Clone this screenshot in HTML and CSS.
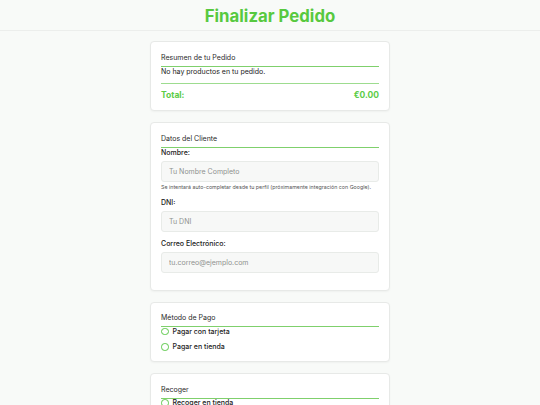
FILE: index.html
```html
<!DOCTYPE html>
<html lang="es">
<head>
<meta charset="utf-8">
<title>Finalizar Pedido</title>
<link rel="stylesheet" href="styles.css">
</head>
<body>
<header class="top">
  <h1 class="title">Finalizar Pedido</h1>
</header>
<main class="page">
  <section class="card">
    <h2 class="card-title">Resumen de tu Pedido</h2>
    <p class="empty">No hay productos en tu pedido.</p>
    <div class="total">
      <span>Total:</span>
      <span>€0.00</span>
    </div>
  </section>

  <section class="card">
    <h2 class="card-title">Datos del Cliente</h2>
    <div class="group">
      <label class="label">Nombre:</label>
      <input class="input" type="text" placeholder="Tu Nombre Completo">
      <p class="help">Se intentará auto-completar desde tu perfil (próximamente integración con Google).</p>
    </div>
    <div class="group">
      <label class="label">DNI:</label>
      <input class="input" type="text" placeholder="Tu DNI">
    </div>
    <div class="group">
      <label class="label">Correo Electrónico:</label>
      <input class="input" type="text" placeholder="tu.correo@ejemplo.com">
    </div>
  </section>

  <section class="card">
    <h2 class="card-title">Método de Pago</h2>
    <div class="options">
      <label class="option"><span class="radio"></span>Pagar con tarjeta</label>
      <label class="option"><span class="radio"></span>Pagar en tienda</label>
    </div>
  </section>

  <section class="card">
    <h2 class="card-title">Recoger</h2>
    <div class="options">
      <label class="option"><span class="radio"></span>Recoger en tienda</label>
    </div>
  </section>
</main>
</body>
</html>
```

FILE: styles.css
```css
* { box-sizing: border-box; }
body {
  margin: 0;
  background: #f8faf8;
  font-family: Inter, "Noto Sans", sans-serif;
  color: #222;
}
.top {
  height: 31px;
  border-bottom: 1px solid #eceeec;
  display: flex;
  align-items: center;
  justify-content: center;
  padding-top: 2px;
}
.title {
  margin: 0;
  font-size: 16.8px;
  font-weight: 700;
  color: #57c93f;
  line-height: 1;
}
.page {
  width: 240px;
  margin: 10px auto 0;
  display: flex;
  flex-direction: column;
  gap: 11px;
}
.card {
  background: #fff;
  border: 1px solid #e7e9e7;
  border-radius: 4px;
  box-shadow: 0 1px 2px rgba(0,0,0,0.04);
  padding: 10px;
}
.card-title {
  margin: 0;
  font-size: 7px;
  font-weight: 400;
  line-height: 10px;
  padding-top: 0.5px;
  padding-bottom: 3px;
  border-bottom: 1.5px solid #7fd06c;
  color: #2a2a2a;
}
.empty {
  margin: 0;
  font-size: 7px;
  line-height: 10px;
  color: #222;
}
.total {
  margin-top: 6.5px;
  border-top: 1.5px solid #9ddc8f;
  padding-top: 6px;
  display: flex;
  justify-content: space-between;
  font-size: 8.5px;
  font-weight: 700;
  color: #5ccc47;
  line-height: 10px;
}
.group {
  margin-bottom: 7px;
  display: flex;
  flex-direction: column;
}
.label {
  font-size: 7px;
  font-weight: 500;
  line-height: 10px;
  margin-bottom: 3px;
  color: #222;
}
.input {
  height: 21px;
  border: 1px solid #e8ebe8;
  border-radius: 3px;
  background: #f7f8f7;
  padding: 0 7px;
  font-family: inherit;
  font-size: 7px;
  color: #333;
  outline: none;
}
.input::placeholder { color: #8f928f; }
.help {
  margin: 1px 0 0;
  font-size: 5.3px;
  line-height: 8px;
  color: #555;
}
.options {
  display: flex;
  flex-direction: column;
  gap: 7.5px;
  padding-top: 0.5px;
}
.option {
  display: flex;
  align-items: center;
  gap: 4px;
  font-size: 7px;
  font-weight: 500;
  line-height: 8px;
  color: #222;
}
.radio {
  width: 7.5px;
  height: 7.5px;
  border: 1.3px solid #5cc84a;
  border-radius: 50%;
}
```
